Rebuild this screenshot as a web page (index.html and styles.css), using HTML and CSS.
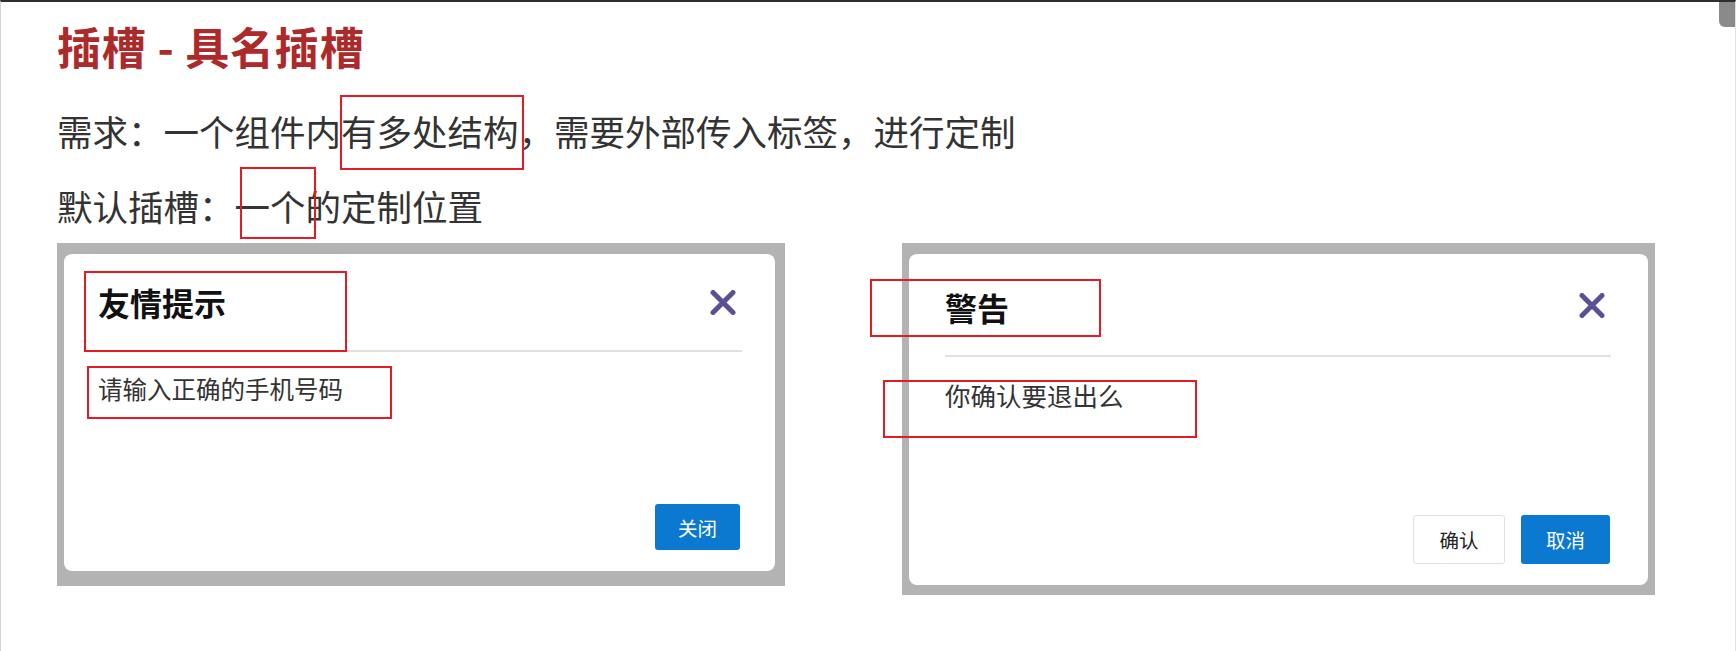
FILE: index.html
```html
<!DOCTYPE html>
<html lang="zh-CN">
<head>
<meta charset="utf-8">
<title>插槽 - 具名插槽</title>
<link rel="stylesheet" href="styles.css">
</head>
<body>
<div class="page">
  <h1 class="title">插槽 - 具名插槽</h1>
  <p class="line">需求：一个组件内有多处结构，需要外部传入标签，进行定制</p>
  <p class="line">默认插槽：一个的定制位置</p>

  <div class="demos">
    <div class="shot shot-a">
      <div class="dialog dialog-a">
        <div class="dlg-head">
          <span class="dlg-title">友情提示</span>
          <svg class="dlg-close" width="26" height="25" viewBox="0 0 26 25"><path d="M3 2.5 L23 22.5 M23 2.5 L3 22.5" stroke="#5a5096" stroke-width="5" stroke-linecap="round" fill="none"/></svg>
        </div>
        <div class="dlg-body">请输入正确的手机号码</div>
        <div class="dlg-foot">
          <span class="btn btn-primary btn-a">关闭</span>
        </div>
      </div>
    </div>

    <div class="shot shot-b">
      <div class="dialog dialog-b">
        <div class="dlg-head">
          <span class="dlg-title">警告</span>
          <svg class="dlg-close" width="26" height="25" viewBox="0 0 26 25"><path d="M3 2.5 L23 22.5 M23 2.5 L3 22.5" stroke="#5a5096" stroke-width="5" stroke-linecap="round" fill="none"/></svg>
        </div>
        <div class="dlg-body">你确认要退出么</div>
        <div class="dlg-foot">
          <span class="btn btn-default">确认</span>
          <span class="btn btn-primary btn-b">取消</span>
        </div>
      </div>
    </div>
  </div>

  <div class="mark mark-1"></div>
  <div class="mark mark-2"></div>
  <div class="mark mark-3"></div>
  <div class="mark mark-4"></div>
  <div class="mark mark-5"></div>
  <div class="mark mark-6"></div>

  <div class="thumb"></div>
</div>
</body>
</html>
```

FILE: styles.css
```css
* { box-sizing: border-box; }

html, body {
  margin: 0;
  padding: 0;
  background: #ffffff;
}

body {
  font-family: "Noto Sans CJK SC", "Noto Sans", sans-serif;
  color: #333333;
}

.page {
  position: relative;
  width: 1736px;
  height: 651px;
  overflow: hidden;
  border-top: 2px solid #2e2e2e;
  border-left: 1px solid #d4d4d4;
  border-right: 1px solid #e2e2e2;
  padding-left: 56px;
}

.title {
  margin: 19px 0 0 0;
  font-size: 44px;
  line-height: 50px;
  font-weight: 700;
  color: #ad2a2b;
  letter-spacing: 0.8px;
}

.line {
  margin: 0;
  font-size: 35.5px;
  line-height: 50px;
  color: #333333;
}

.title + .line { margin-top: 35px; }
.line + .line { margin-top: 25px; }

.demos {
  display: flex;
  align-items: flex-start;
  gap: 117px;
  margin-top: 12px;
}

.shot {
  background: #b3b3b3;
  display: flex;
}

.shot-a {
  width: 728px;
  height: 343px;
  padding: 11px 10px 15px 7px;
}

.shot-b {
  width: 753px;
  height: 352px;
  padding: 11px 7px 10px 7px;
}

.dialog {
  flex: 1;
  background: #ffffff;
  border-radius: 8px;
  display: flex;
  flex-direction: column;
}

.dialog-a { padding: 0 33px 21px 34px; }
.dialog-b { padding: 0 37px 21px 36px; }

.dlg-head {
  display: flex;
  align-items: center;
  justify-content: space-between;
  border-bottom: 2px solid #e0e0e0;
}

.dialog-a .dlg-head { height: 98px; }
.dialog-b .dlg-head { height: 103px; }

.dlg-title {
  font-size: 32px;
  line-height: 40px;
  font-weight: 700;
  color: #111111;
}

.dialog-b .dlg-title { margin-top: 4px; }

.dlg-close {
  display: block;
  margin-right: 6px;
}

.dialog-b .dlg-close { margin-right: 6px; margin-top: 1px; }

.dlg-body {
  flex: 1;
  font-size: 24.5px;
  line-height: 34px;
  color: #333333;
  padding-top: 20px;
}

.dialog-b .dlg-body {
  font-size: 25.5px;
  padding-top: 21px;
}

.dlg-foot {
  display: flex;
  justify-content: flex-end;
  gap: 16px;
}

.btn {
  display: flex;
  align-items: center;
  justify-content: center;
  border-radius: 3px;
  font-size: 19.5px;
}

.btn-primary {
  background: #0a79cf;
  color: #ffffff;
}

.btn-a {
  width: 85px;
  height: 46px;
  margin-right: 2px;
}

.btn-b {
  width: 89px;
  height: 49px;
  margin-right: 1px;
}

.btn-default {
  width: 92px;
  height: 49px;
  background: #ffffff;
  border: 1px solid #e0e0e0;
  color: #222222;
}

.mark {
  position: absolute;
  border: 2px solid #e31b23;
}

.mark-1 { left: 339px; top: 93px; width: 184px; height: 75px; }
.mark-2 { left: 239px; top: 165px; width: 76px; height: 72px; }
.mark-3 { left: 83px; top: 269px; width: 263px; height: 81px; }
.mark-4 { left: 86px; top: 364px; width: 305px; height: 53px; }
.mark-5 { left: 869px; top: 277px; width: 231px; height: 58px; }
.mark-6 { left: 882px; top: 378px; width: 314px; height: 58px; }

.thumb {
  position: absolute;
  right: 0;
  top: 0;
  width: 16px;
  height: 25px;
  background: #8a8a8a;
  border-bottom-left-radius: 6px;
}
```
